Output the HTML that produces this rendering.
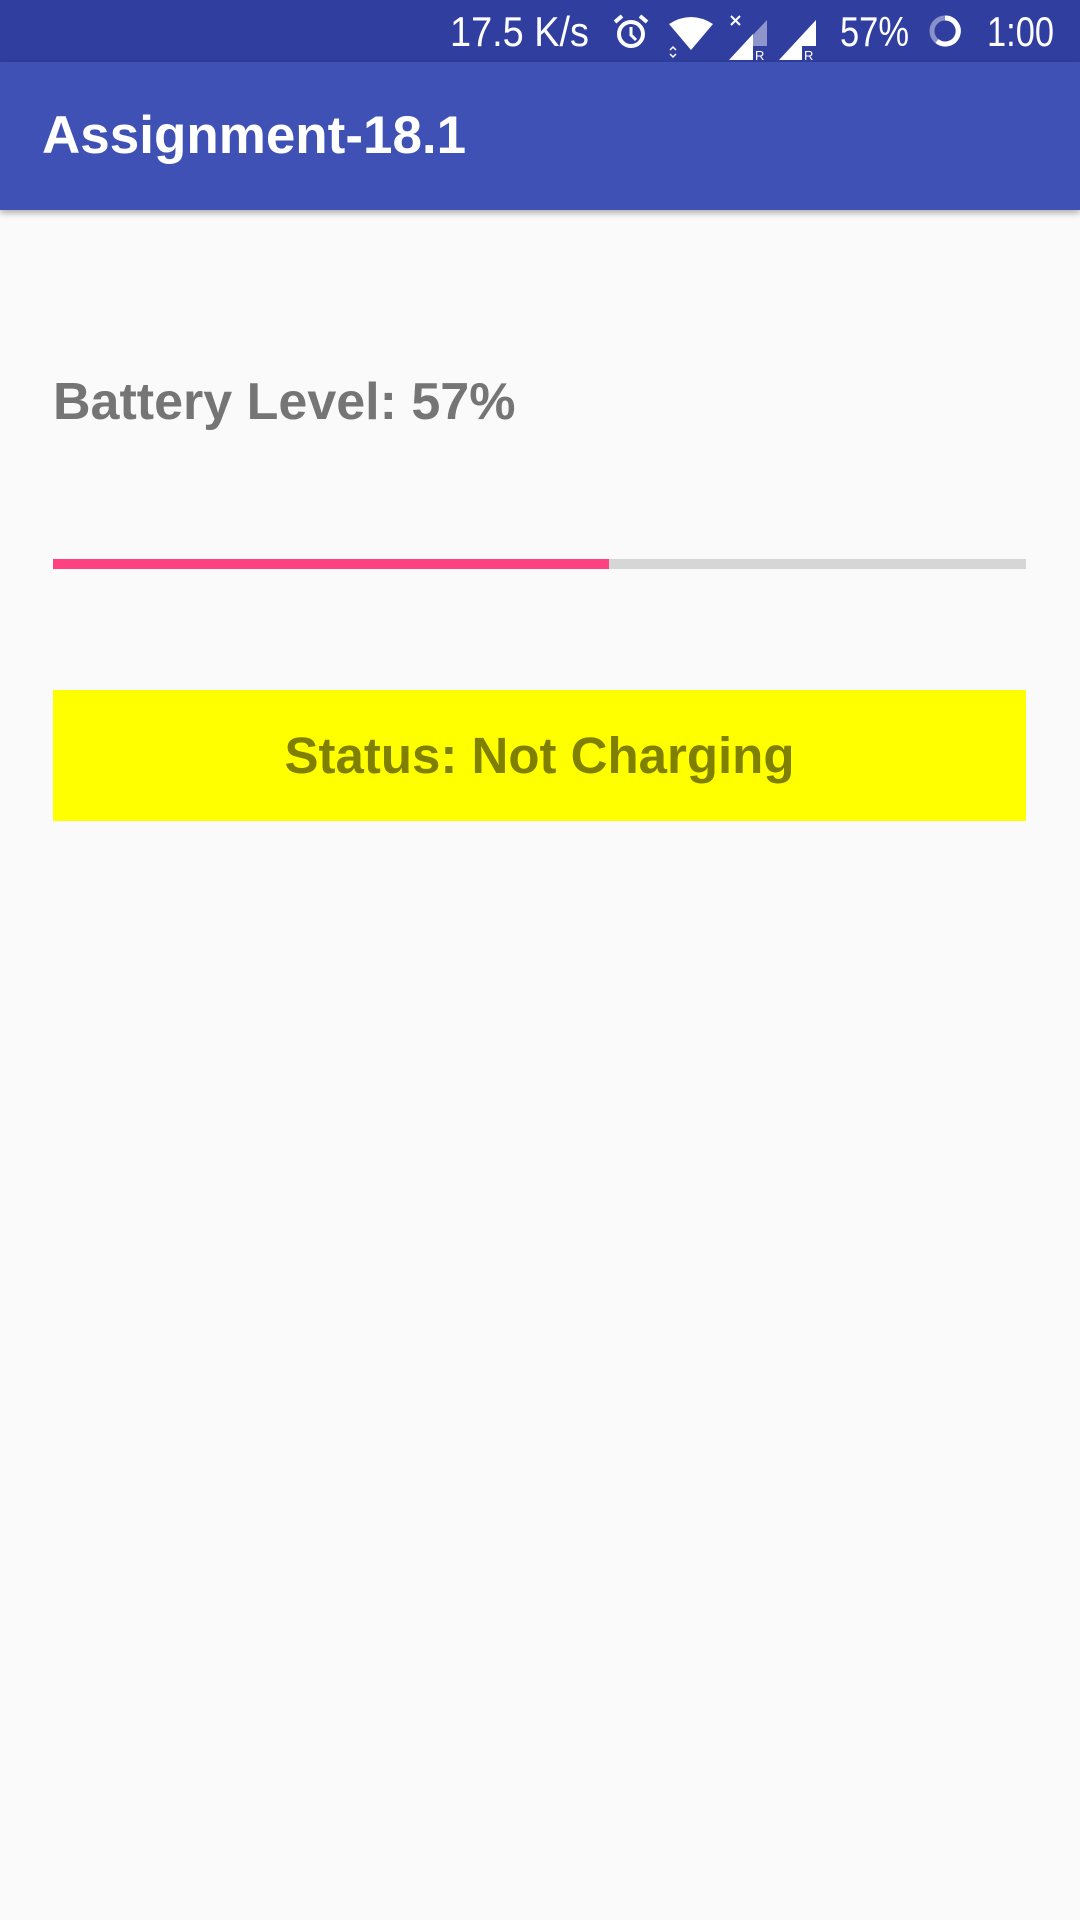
<!DOCTYPE html>
<html><head><meta charset="utf-8"><style>
body{margin:0;width:1080px;height:1920px;background:#FAFAFA;font-family:"Liberation Sans",sans-serif;position:relative;overflow:hidden}
.sb{position:absolute;top:0;left:0;width:1080px;height:62px;background:#303F9F}
.tb{position:absolute;top:62px;left:0;width:1080px;height:148px;background:#3F51B5;box-shadow:0 3px 6px rgba(0,0,0,.3)}
.tb div{position:absolute;left:42px;top:43px;color:#fff;font-size:53px;font-weight:bold}
.bl{position:absolute;left:53px;top:372px;color:#757575;font-size:52px;font-weight:bold}
.track{position:absolute;left:53px;top:559px;width:973px;height:10px;background:#D6D6D6}
.fill{position:absolute;left:0;top:0;width:556px;height:10px;background:#FF4081}
.st{position:absolute;left:53px;top:690px;width:973px;height:131px;background:#FFFF00;color:#7F7F00;font-size:51px;font-weight:bold;text-align:center;line-height:131px}
</style></head><body>
<div class="sb">
<svg width="1080" height="62" viewBox="0 0 1080 62" style="position:absolute;left:0;top:0">
<g fill="#fff" font-family="Liberation Sans" font-size="42">
<text x="450" y="46" textLength="139" lengthAdjust="spacingAndGlyphs">17.5 K/s</text>
<text x="840" y="46" textLength="69" lengthAdjust="spacingAndGlyphs">57%</text>
<text x="987" y="46" textLength="67" lengthAdjust="spacingAndGlyphs">1:00</text>
</g>
<g transform="translate(613,16)">
<circle cx="18" cy="18" r="12" fill="none" stroke="#fff" stroke-width="4"/><path d="M18 11v8l5 5" stroke="#fff" stroke-width="3" fill="none"/><path d="M2 6l7-6M34 6l-7-6" stroke="#fff" stroke-width="4"/></g>
<g transform="translate(669,16)"><path d="M0 8Q22 -6 44 8L22 34Z" fill="#fff"/><path d="M1 34l3-3 3 3M1 38l3 3 3-3" stroke="#fff" stroke-width="1.5" fill="none"/></g>
<g transform="translate(729,16)"><path d="M38 4V44H0Z" fill="#fff" opacity=".45"/><path d="M24 18V44H0Z" fill="#fff"/><path d="M2 0l9 9M11 0l-9 9" stroke="#fff" stroke-width="2"/><rect x="24" y="30" width="14" height="14" fill="#303F9F"/><text x="26" y="44" font-size="13" fill="#fff" font-family="Liberation Sans">R</text></g>
<g transform="translate(779,16)"><path d="M37 4V44H0Z" fill="#fff"/><rect x="23" y="30" width="14" height="14" fill="#303F9F"/><text x="25" y="44" font-size="13" fill="#fff" font-family="Liberation Sans">R</text></g>
<g transform="translate(928,14)"><circle cx="17" cy="17" r="13" fill="none" stroke="#8891c8" stroke-width="5"/><path d="M17 4A13 13 0 1 1 9 27" fill="none" stroke="#fff" stroke-width="5"/></g>
</svg>
</div>
<div class="tb"><div>Assignment-18.1</div></div>
<div class="bl">Battery Level: 57%</div>
<div class="track"><div class="fill"></div></div>
<div class="st">Status: Not Charging</div>
</body></html>
